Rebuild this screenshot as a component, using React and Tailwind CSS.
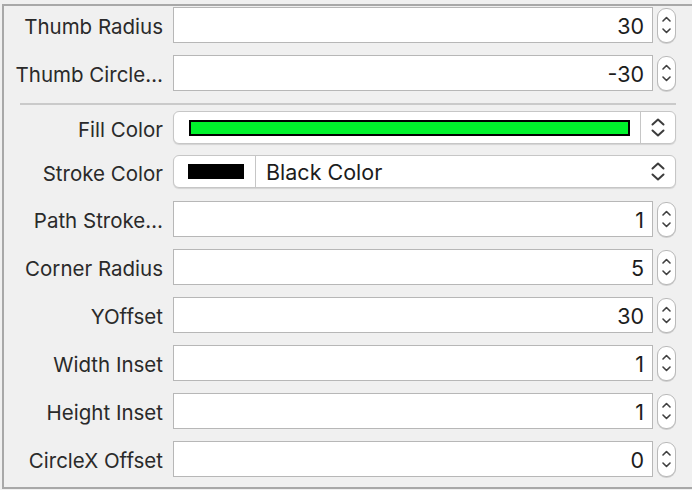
import React from "react";

const font = { fontFamily: "Inter, 'Liberation Sans', sans-serif" };

function Stepper() {
  return (
    <div className="ml-[4px] w-[19px] h-[35px] rounded-[9px] border border-[#b9b9b9] bg-white shadow-[0_1px_0_#d0d0d0] flex flex-col items-center justify-center gap-[6px]">
      <svg width="9" height="6" viewBox="0 0 9 6">
        <path d="M1 5 L4.5 1.5 L8 5" fill="none" stroke="#404040" strokeWidth="1.6" strokeLinecap="round" strokeLinejoin="round" />
      </svg>
      <svg width="9" height="6" viewBox="0 0 9 6">
        <path d="M1 1 L4.5 4.5 L8 1" fill="none" stroke="#404040" strokeWidth="1.6" strokeLinecap="round" strokeLinejoin="round" />
      </svg>
    </div>
  );
}

function PopupChevrons() {
  return (
    <div className="flex flex-col items-center gap-[3px]">
      <svg width="14" height="8" viewBox="0 0 14 8">
        <path d="M1.5 6.5 L7 1.5 L12.5 6.5" fill="none" stroke="#3c3c3c" strokeWidth="2" strokeLinecap="round" strokeLinejoin="round" />
      </svg>
      <svg width="14" height="8" viewBox="0 0 14 8">
        <path d="M1.5 1.5 L7 6.5 L12.5 1.5" fill="none" stroke="#3c3c3c" strokeWidth="2" strokeLinecap="round" strokeLinejoin="round" />
      </svg>
    </div>
  );
}

function Label({ children }) {
  return (
    <div className="w-[159px] shrink-0 text-right pt-[5px] text-[20.5px] text-[#2a2a2a] whitespace-nowrap leading-none">
      {children}
    </div>
  );
}

function NumberRow({ label, value, className = "" }) {
  return (
    <div className={"flex items-center h-[36px] " + className}>
      <Label>{label}</Label>
      <div className="ml-[10px] w-[480px] h-[36px] border border-[#b7b7b7] bg-white flex items-center justify-end pr-[8px] pt-[4px] text-[21.5px] text-[#1c1c1c] leading-none">
        {value}
      </div>
      <Stepper />
    </div>
  );
}

export default function App() {
  return (
    <div className="w-[692px] h-[490px] bg-[#f0f0f0] overflow-hidden" style={font}>
      <div className="ml-[2px] mt-[4px] h-[485px] border-l-2 border-t-2 border-b-2 border-[#a8a8a8] flex flex-col pt-[1px]">
        <NumberRow label="Thumb Radius" value="30" />
        <NumberRow label="Thumb Circle…" value="-30" className="mt-[12px]" />
        <div className="mt-[12px] ml-[16px] w-[656px] h-[2px] bg-[#cacaca]" />
        <div className="mt-[6px] flex items-center h-[33px]">
          <Label>Fill Color</Label>
          <div className="ml-[10px] w-[503px] h-[33px] rounded-[6px] border border-[#c6c6c6] bg-white shadow-[0_1px_1px_rgba(0,0,0,0.12)] flex items-stretch">
            <div className="flex-1 flex items-center pl-[15px] pr-[10px]">
              <div className="w-full h-[16px] border-2 border-black bg-[#00f22c]" />
            </div>
            <div className="w-[1px] bg-[#c6c6c6]" />
            <div className="w-[34px] flex items-center justify-center">
              <PopupChevrons />
            </div>
          </div>
        </div>
        <div className="mt-[11px] flex items-center h-[33px]">
          <Label>Stroke Color</Label>
          <div className="ml-[10px] w-[503px] h-[33px] rounded-[6px] border border-[#c6c6c6] bg-white shadow-[0_1px_1px_rgba(0,0,0,0.12)] flex items-stretch">
            <div className="w-[81px] flex items-center pl-[14px]">
              <div className="w-[56px] h-[15px] bg-black" />
            </div>
            <div className="w-[1px] bg-[#c6c6c6]" />
            <div className="flex-1 flex items-center pl-[10px] pt-[3px] text-[21.5px] text-[#1c1c1c] leading-none">
              Black Color
            </div>
            <div className="w-[34px] flex items-center justify-center">
              <PopupChevrons />
            </div>
          </div>
        </div>
        <NumberRow label="Path Stroke…" value="1" className="mt-[13px]" />
        <NumberRow label="Corner Radius" value="5" className="mt-[12px]" />
        <NumberRow label="YOffset" value="30" className="mt-[12px]" />
        <NumberRow label="Width Inset" value="1" className="mt-[12px]" />
        <NumberRow label="Height Inset" value="1" className="mt-[12px]" />
        <NumberRow label="CircleX Offset" value="0" className="mt-[12px]" />
      </div>
    </div>
  );
}
